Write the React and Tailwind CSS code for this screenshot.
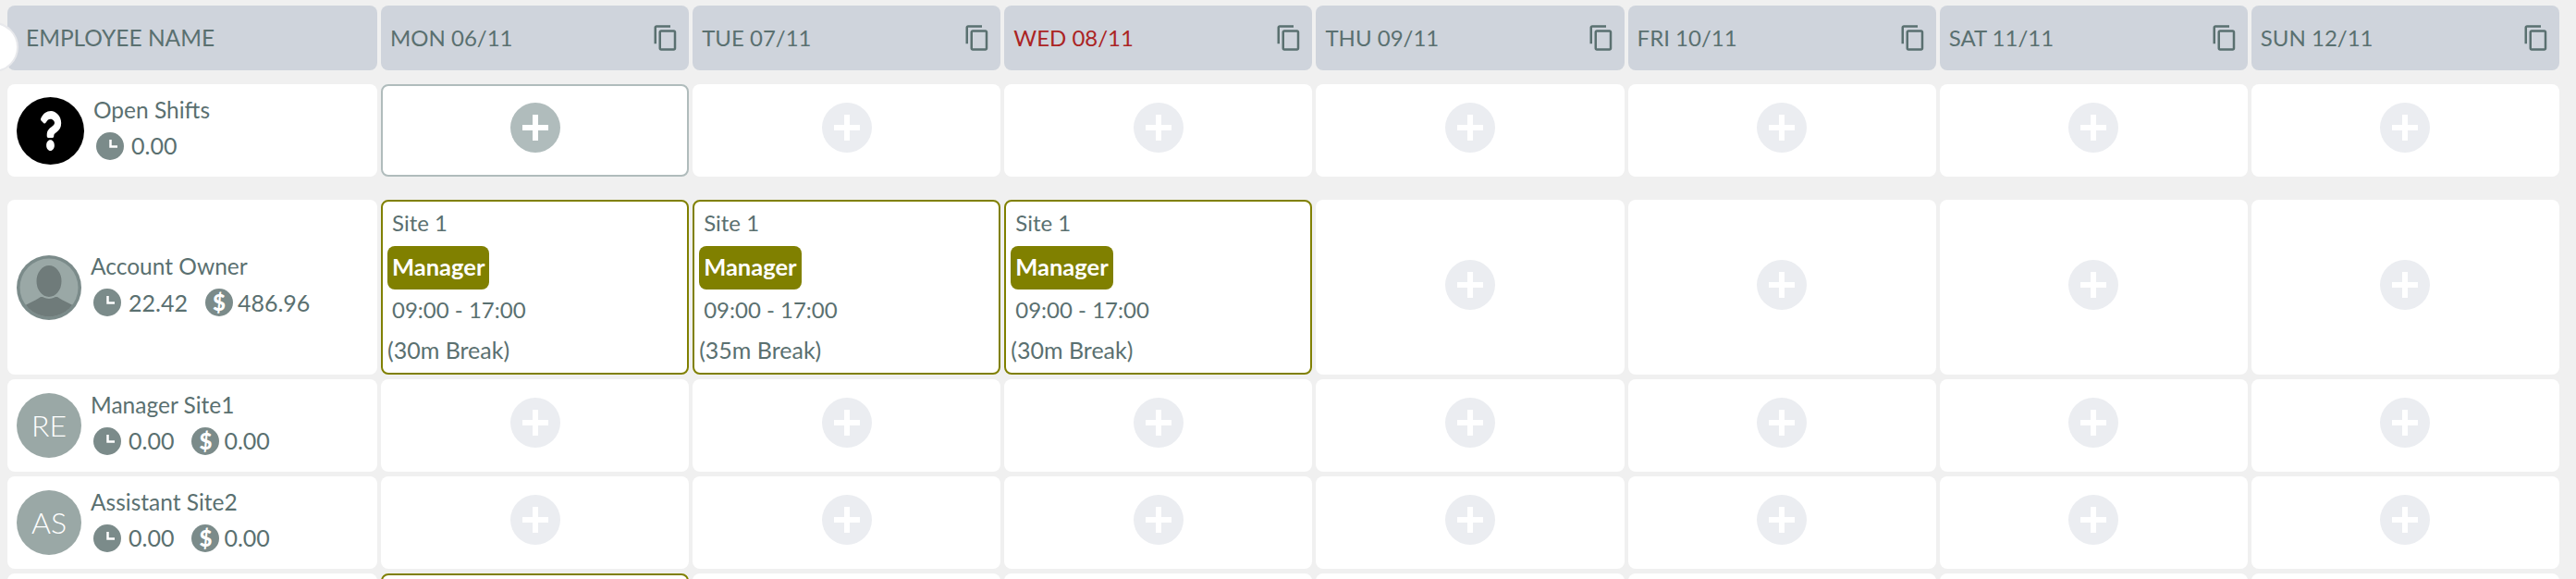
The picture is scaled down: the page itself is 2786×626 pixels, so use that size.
import React from 'react';
import { FaQuestion } from 'react-icons/fa';

const days = ['MON 06/11', 'TUE 07/11', 'WED 08/11', 'THU 09/11', 'FRI 10/11', 'SAT 11/11', 'SUN 12/11'];
const latoText = "font-['Lato','Open_Sans',sans-serif]";

const CopyIcon = () => (
    <svg width="30" height="30" viewBox="0 0 24 24" fill="#5a7070" className="shrink-0">
        <path d="M16 1H4c-1.1 0-2 .9-2 2v14h2V3h12V1zm3 4H8c-1.1 0-2 .9-2 2v14c0 1.1.9 2 2 2h11c1.1 0 2-.9 2-2V7c0-1.1-.9-2-2-2zm0 16H8V7h11v14z" />
    </svg>
);

const ClockIcon = () => (
    <svg width="30" height="30" viewBox="0 0 30 30" className="shrink-0">
        <circle cx="15" cy="15" r="15" fill="#7b8b8a" />
        <path d="M15.5 8v7.5H23" fill="none" stroke="#fff" strokeWidth="2.5" />
    </svg>
);

const DollarIcon = () => (
    <span className="flex h-[30px] w-[30px] shrink-0 items-center justify-center rounded-full bg-[#7b8b8a] text-[24px] font-black leading-none text-white">$</span>
);

const PersonAvatar = () => (
    <svg width="70" height="70" viewBox="0 0 70 70" className="shrink-0">
        <defs>
            <clipPath id="avatar-clip">
                <circle cx="35" cy="35" r="31.5" />
            </clipPath>
        </defs>
        <circle cx="35" cy="35" r="35" fill="#7b8b8a" />
        <circle cx="35" cy="35" r="31.5" fill="#9aa8a6" />
        <g clipPath="url(#avatar-clip)">
            <path d="M4 58c5-5 15-8 22-13h18c7 5 17 8 22 13v12H4z" fill="#6f7b7a" />
            <ellipse cx="35" cy="28" rx="14.5" ry="18" fill="#6f7b7a" stroke="#9aa8a6" strokeWidth="2" />
        </g>
    </svg>
);

const Stats = ({ hours, pay }) => (
    <div className="flex items-center text-[25px] leading-none text-[#5a7070]">
        <ClockIcon />
        <span className="ml-2">{hours}</span>
        {pay && (
            <React.Fragment>
                <span className="ml-[19px]"><DollarIcon /></span>
                <span className="ml-[5px]">{pay}</span>
            </React.Fragment>
        )}
    </div>
);

const EmployeeCell = ({ avatar, name, hours, pay }) => (
    <div className="flex h-full items-center rounded-lg bg-white pl-[10px]">
        {avatar}
        <div className="ml-[10px] flex flex-col gap-[9px] pb-[6px]">
            <div className="text-[24.5px] leading-[30px] text-[#5a7070]">{name}</div>
            <div className="pl-[3px]"><Stats hours={hours} pay={pay} /></div>
        </div>
    </div>
);

const InitialsAvatar = ({ text }) => (
    <div className="flex h-[70px] w-[70px] shrink-0 items-center justify-center rounded-full bg-[#9aa8a6] text-[32px] font-light text-white">{text}</div>
);

const AddCell = ({ active }) => (
    <div className={`flex h-full items-center justify-center rounded-lg bg-white pb-[6px] ${active ? 'border-2 border-[#b0bcbc]' : ''}`}>
        <div className={`relative h-[54px] w-[54px] rounded-full ${active ? 'bg-[#b0bcbc]' : 'bg-[#ebedf1]'}`}>
            <div className="absolute left-[13px] top-[24px] h-[6px] w-[28px] bg-white" />
            <div className="absolute left-[24px] top-[13px] h-[28px] w-[6px] bg-white" />
        </div>
    </div>
);

const ShiftCell = ({ breakText }) => (
    <div className="h-full rounded-lg border-2 border-[#808000] bg-white pl-[5px] text-[24px] text-[#5a7070]">
        <div className="pl-[5px] pt-[7px] leading-[32px]">Site 1</div>
        <div className="mt-[9px] inline-block h-[47px] rounded-lg bg-[#808000] px-[5px] text-[25.5px] font-bold leading-[45px] text-white">Manager</div>
        <div className="mt-[6px] pl-[5px] leading-[32px]">09:00 - 17:00</div>
        <div className="mt-[11px] text-[25px] leading-[32px]">{breakText}</div>
    </div>
);

const EmptyRow = ({ avatar, name, hours, pay, firstCell, className }) => (
    <div className={`grid grid-cols-[400px_repeat(7,minmax(0,1fr))] gap-x-1 ${className}`}>
        <EmployeeCell avatar={avatar} name={name} hours={hours} pay={pay} />
        {days.map((day, index) => (
            <div key={day}>{index === 0 && firstCell ? firstCell : <AddCell />}</div>
        ))}
    </div>
);

const App = () => {
    return (
        <div className={`relative h-[626px] overflow-hidden bg-[#f0f0f0] pl-2 pr-[18px] pt-[6px] ${latoText}`}>
            <div className="grid h-[70px] grid-cols-[400px_repeat(7,minmax(0,1fr))] gap-x-1">
                <div className="flex items-center rounded-lg bg-[#cfd4dc] pl-5 text-[24.5px] text-[#5a7070]">EMPLOYEE NAME</div>
                {days.map((day) => (
                    <div key={day} className="flex items-center justify-between rounded-lg bg-[#cfd4dc] pl-[10px] pr-[10px] text-[24px]">
                        <span className={day.startsWith('WED') ? 'text-[#ab2424]' : 'text-[#5a7070]'}>{day}</span>
                        <CopyIcon />
                    </div>
                ))}
            </div>

            <EmptyRow
                className="mt-[15px] h-[100px]"
                avatar={
                    <div className="flex h-[73px] w-[73px] shrink-0 items-center justify-center rounded-full bg-black text-white">
                        <FaQuestion size={43} className="scale-x-[0.75]" />
                    </div>
                }
                name="Open Shifts"
                hours="0.00"
                firstCell={<AddCell active />}
            />

            <div className="mt-[25px] grid h-[189px] grid-cols-[400px_repeat(7,minmax(0,1fr))] gap-x-1">
                <EmployeeCell avatar={<PersonAvatar />} name="Account Owner" hours="22.42" pay="486.96" />
                <ShiftCell breakText="(30m Break)" />
                <ShiftCell breakText="(35m Break)" />
                <ShiftCell breakText="(30m Break)" />
                <AddCell />
                <AddCell />
                <AddCell />
                <AddCell />
            </div>

            <EmptyRow className="mt-[5px] h-[100px]" avatar={<InitialsAvatar text="RE" />} name="Manager Site1" hours="0.00" pay="0.00" />
            <EmptyRow className="mt-[5px] h-[100px]" avatar={<InitialsAvatar text="AS" />} name="Assistant Site2" hours="0.00" pay="0.00" />
            <EmptyRow
                className="mt-[5px] h-[100px]"
                avatar={<InitialsAvatar text="" />}
                name=""
                hours=""
                firstCell={<div className="h-full rounded-lg border-2 border-[#808000] bg-white" />}
            />

            {/* collapse handle sitting over the header's left edge */}
            <div className="absolute left-[-34px] top-[24px] h-[54px] w-[54px] rounded-full border-2 border-[#e8e9ec] bg-white" />
        </div>
    );
};

export default App;
